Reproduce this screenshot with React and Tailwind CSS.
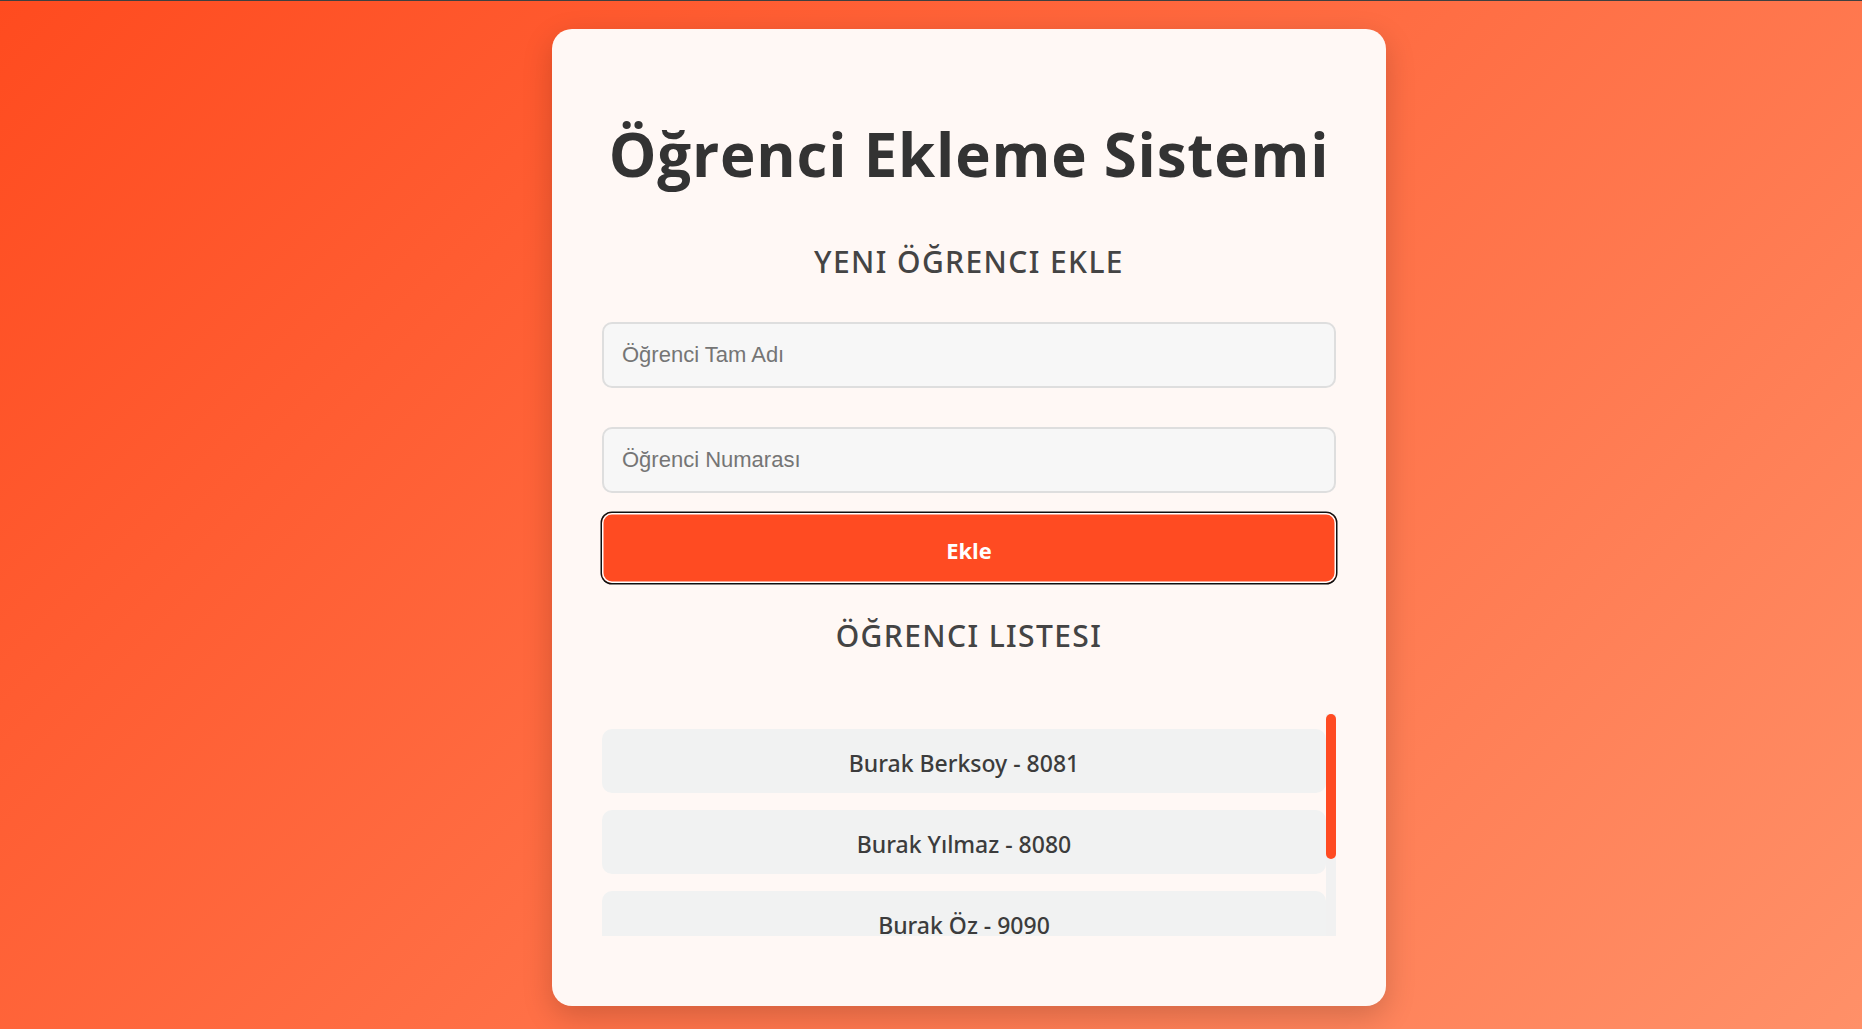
export default function App() {
  const students = [
    "Burak Berksoy - 8081",
    "Burak Yılmaz - 8080",
    "Burak Öz - 9090",
  ];
  const med = { fontFamily: '"Noto Sans", "Open Sans", sans-serif' };
  return (
    <div
      className="min-h-screen w-full bg-[linear-gradient(135deg,#ff4b1f_0%,#ff9068_100%)]"
      style={{ fontFamily: '"Open Sans", "Noto Sans", sans-serif' }}
    >
      <div className="h-px w-full bg-[#404040]" />
      <div className="pt-[28px] pb-[23px]">
        <div className="ml-[552px] w-[834px] h-[977px] rounded-[20px] bg-[#fff8f5] shadow-[0_10px_30px_rgba(0,0,0,0.18)] px-[50px] pt-[95px] flex flex-col">
          <h1 className="text-center text-[60px] leading-[60px] font-bold text-[#333333] tracking-[0.8px]">
            Öğrenci Ekleme Sistemi
          </h1>
          <h2
            className="mt-[60px] text-center text-[30px] leading-[36px] font-medium text-[#444444] tracking-[1.4px]"
            style={med}
          >
            YENI ÖĞRENCI EKLE
          </h2>
          <input
            className="mt-[42px] h-[66px] w-full rounded-[10px] border-2 border-[#dedede] bg-[#f7f7f7] px-[18px] text-[22px] text-[#333] placeholder:text-[#757575] outline-none"
            style={{ fontFamily: '"Liberation Sans", Arial, sans-serif' }}
            placeholder="Öğrenci Tam Adı"
          />
          <input
            className="mt-[39px] h-[66px] w-full rounded-[10px] border-2 border-[#dedede] bg-[#f7f7f7] px-[18px] text-[22px] text-[#333] placeholder:text-[#757575] outline-none"
            style={{ fontFamily: '"Liberation Sans", Arial, sans-serif' }}
            placeholder="Öğrenci Numarası"
          />
          <button className="mt-[20px] h-[70px] w-full rounded-[10px] bg-[#ff4b22] pt-[5px] text-white text-[22px] font-bold shadow-[inset_0_0_0_1.5px_#ffffff,0_0_0_1.5px_#101010]">
            Ekle
          </button>
          <h2
            className="mt-[35px] text-center text-[30px] leading-[36px] font-medium text-[#444444] tracking-[1.4px]"
            style={med}
          >
            ÖĞRENCI LISTESI
          </h2>
          <div className="mt-[60px] h-[222px] flex">
            <div className="flex-1 overflow-hidden">
              <ul className="flex flex-col gap-[17px] pt-[15px]">
                {students.map((s) => (
                  <li
                    key={s}
                    className="h-[64px] shrink-0 rounded-[10px] bg-[#f1f2f2] flex items-center justify-center pt-[5px] text-[23px] font-medium text-[#3c3c3c]"
                    style={med}
                  >
                    {s}
                  </li>
                ))}
              </ul>
            </div>
            <div className="w-[10px] h-full flex flex-col bg-[#f1f1f1]">
              <div className="h-[145px] w-full rounded-full bg-[#ff4b22]" />
            </div>
          </div>
        </div>
      </div>
    </div>
  );
}
